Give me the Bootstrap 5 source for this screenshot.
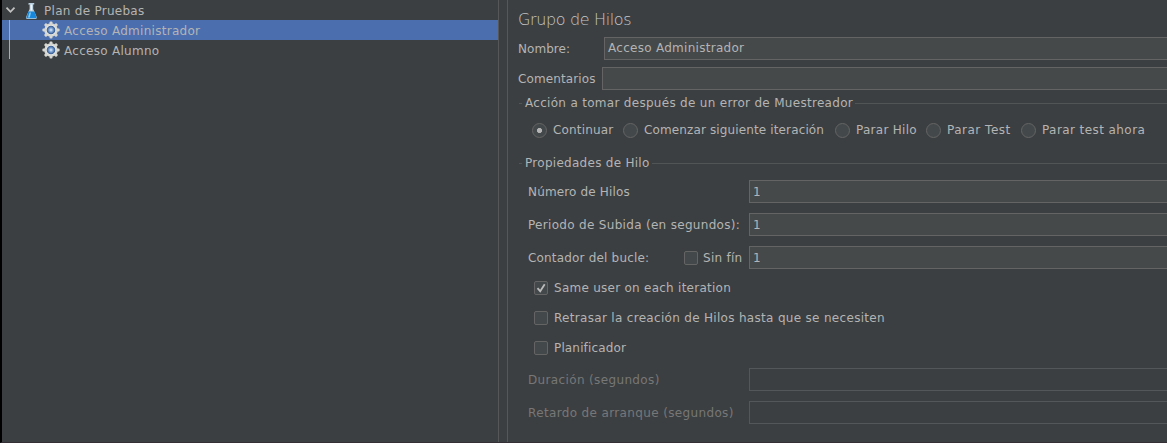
<!DOCTYPE html>
<html lang="es">
<head>
<meta charset="utf-8">
<meta name="viewport" content="width=device-width, initial-scale=1">
<title>Grupo de Hilos</title>
<link href="https://cdn.jsdelivr.net/npm/bootstrap@5.3.0/dist/css/bootstrap.min.css" rel="stylesheet">
<style>
body{height:443px;background:#3c3f41;color:#b4b4b4;font:12px/20px "DejaVu Sans",sans-serif;letter-spacing:.28px;white-space:nowrap}
.app{height:443px;border-left:2px solid #000;border-bottom:1px solid #332f34}
.tree{width:496px}
.tree-row{height:20px;padding-left:39px}
.tree-row span{line-height:20px;padding-top:2px}
.tree-row.selected{background:#4b6eaf}
.tree-row svg{flex:none}
.branch{position:relative}
.branch::before{content:"";position:absolute;left:7px;top:0;width:1px;height:39px;background:#7fb5e8;z-index:1}
.splitter{width:10px;border:solid #555758;border-width:0 1px}
.panel{padding-left:10px;min-width:0}
.panel-title{font-size:16px;font-weight:200;line-height:20px;margin:10px 0 7px;letter-spacing:-.36px;color:#c6c6c6}
.field{height:23px;border:1px solid #646464;border-right:0;background:#45494a;padding-left:3px;line-height:21px;min-width:0}
.props .field{line-height:23px}
.field.off{background:transparent;border-color:#54575a}
.form-line{height:23px}
.off-text{color:#777;letter-spacing:.36px}
.group-head{height:20px;margin-left:1px}
.group-head::before{content:"";width:3px;height:1px;background:#515555;margin-right:3px}
.group-head::after{content:"";flex:1;height:1px;background:#515555;margin-left:2px}
.props{padding-left:10px}
.label-col{width:221px;flex:none}
.radio{width:15px;height:15px;border:1px solid #646464;border-radius:50%;background:#43494a;flex:none}
.radio.on{background:radial-gradient(circle,#b4b4b4 0 2.2px,#43494a 2.9px)}
.tick{width:14px;height:14px;border:1px solid #646464;border-radius:2px;background:#43494a;flex:none}
.tick svg{display:block}
.check-line{height:20px;padding-left:6px;margin-bottom:10px}
</style>
</head>
<body>
<svg width="0" height="0" class="position-absolute"><defs>
<radialGradient id="hub"><stop offset="0" stop-color="#e4effc"/><stop offset=".45" stop-color="#7fa3d2"/><stop offset="1" stop-color="#284f88"/></radialGradient>
<g id="gear"><g fill="#d6d7d2"><circle cx="9" cy="9" r="6.8"/><g id="teeth"><rect x="7.5" y=".4" width="3" height="17.2" rx="1"/><rect x=".4" y="7.5" width="17.2" height="3" rx="1"/></g><use href="#teeth" transform="rotate(45 9 9)"/></g><circle cx="9" cy="9" r="5" fill="#efefec"/><circle cx="9" cy="9" r="4.3" fill="url(#hub)"/></g>
</defs></svg>
<main class="app d-flex overflow-hidden">
  <aside class="tree flex-shrink-0">
    <div class="tree-row d-flex align-items-center p-0">
      <svg width="42" height="20" viewBox="0 0 42 20"><path d="M4.500 7.600l4 4.200 4-4.200" fill="none" stroke="#c1c1c1" stroke-width="1.800"/><path d="M26.700 3h5.500v1.500h-1V9l3.500 8q.5 1.900-1.100 1.900h-8.400q-1.600 0-1.100-1.900l3.500-8V4.500h-1.400z" fill="#b9cfdf"/><path d="M28.600 4.500h1.500v6h-1.500z" fill="#f0f5f8"/><path d="M26.500 11.500h5.900l2 5.500q.2 1.300-.8 1.300h-8.300q-1 0-.8-1.300z" fill="#1687dc"/><path d="M27.500 12.500h1.500l-1.200 5h-1.800z" fill="#8acbf5"/></svg>
      <span>Plan de Pruebas</span>
    </div>
    <div class="branch">
      <div class="tree-row selected d-flex align-items-center"><svg width="23" height="18"><use href="#gear" x="1"/></svg><span>Acceso Administrador</span></div>
      <div class="tree-row d-flex align-items-center"><svg width="23" height="18"><use href="#gear" x="1"/></svg><span>Acceso Alumno</span></div>
    </div>
  </aside>
  <div class="splitter flex-shrink-0"></div>
  <section class="panel flex-grow-1">
    <h1 class="panel-title">Grupo de Hilos</h1>
    <div class="form-line d-flex align-items-center"><label style="width:86px;letter-spacing:.05px">Nombre:</label><div class="field flex-grow-1">Acceso Administrador</div></div>
    <div class="form-line d-flex align-items-center" style="margin-top:7px"><label style="width:84px;letter-spacing:.12px">Comentarios</label><div class="field flex-grow-1"></div></div>
    <div class="group-head d-flex align-items-center" style="margin-top:3px;letter-spacing:.3px">Acción a tomar después de un error de Muestreador</div>
    <div class="d-flex align-items-center" style="height:20px;margin:7px 0 13px 14px">
      <i class="radio on"></i><span style="width:70px;margin-left:6px;letter-spacing:.17px">Continuar</span>
      <i class="radio"></i><span style="width:191px;margin-left:6px;letter-spacing:.13px">Comenzar siguiente iteración</span>
      <i class="radio"></i><span style="width:70px;margin-left:6px">Parar Hilo</span>
      <i class="radio"></i><span style="width:74px;margin-left:6px;letter-spacing:.5px">Parar Test</span>
      <i class="radio"></i><span style="margin-left:6px;letter-spacing:.42px">Parar test ahora</span>
    </div>
    <div class="group-head d-flex align-items-center">Propiedades de Hilo</div>
    <div class="props">
      <div class="form-line d-flex align-items-center" style="margin-top:7px"><label class="label-col" style="letter-spacing:.15px">Número de Hilos</label><div class="field flex-grow-1">1</div></div>
      <div class="form-line d-flex align-items-center" style="margin-top:10px"><label class="label-col" style="letter-spacing:.31px">Periodo de Subida (en segundos):</label><div class="field flex-grow-1">1</div></div>
      <div class="form-line d-flex align-items-center" style="margin-top:10px"><div class="label-col d-flex align-items-center"><span style="width:156px;letter-spacing:.18px">Contador del bucle:</span><i class="tick"></i><span style="margin-left:5px">Sin fín</span></div><div class="field flex-grow-1">1</div></div>
      <div class="check-line d-flex align-items-center" style="margin-top:9px"><i class="tick"><svg width="12" height="12"><path d="M2.500 6.200l2.700 3 4.500-7" fill="none" stroke="#bbb" stroke-width="1.800"/></svg></i><span style="margin-left:6px;letter-spacing:.26px">Same user on each iteration</span></div>
      <div class="check-line d-flex align-items-center"><i class="tick"></i><span style="margin-left:6px;letter-spacing:.31px">Retrasar la creación de Hilos hasta que se necesiten</span></div>
      <div class="check-line d-flex align-items-center"><i class="tick"></i><span style="margin-left:6px;letter-spacing:.15px">Planificador</span></div>
      <div class="form-line d-flex align-items-center off-text"><label class="label-col">Duración (segundos)</label><div class="field off flex-grow-1"></div></div>
      <div class="form-line d-flex align-items-center off-text" style="margin-top:10px"><label class="label-col">Retardo de arranque (segundos)</label><div class="field off flex-grow-1"></div></div>
    </div>
  </section>
</main>
<script src="https://cdn.jsdelivr.net/npm/bootstrap@5.3.0/dist/js/bootstrap.bundle.min.js"></script>
</body>
</html>
